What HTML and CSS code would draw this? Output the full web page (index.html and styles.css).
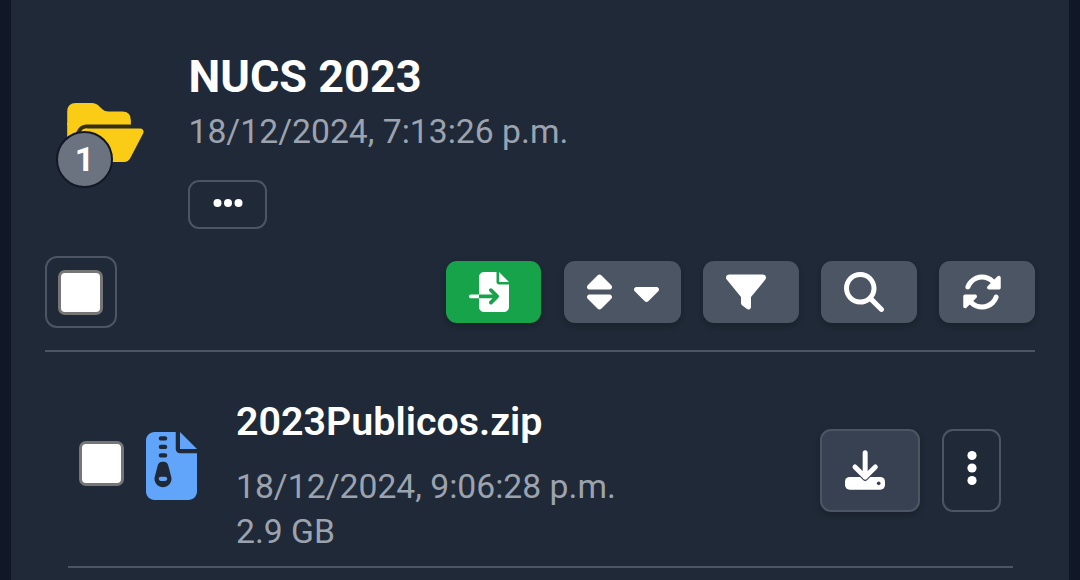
FILE: index.html
```html
<!DOCTYPE html>
<html lang="es">
<head>
    <meta charset="UTF-8">
    <title>NUCS 2023</title>
    <link rel="stylesheet" href="styles.css">
</head>
<body>
    <main class="panel">
        <!-- Folder header -->
        <header class="folder">
            <div class="folder-icon">
                <svg class="icon-folder" viewBox="0 0 231 178">
                    <path class="folder-back" d="M0 178V26Q0 0 26 0H74Q88 0 98 11L106 19Q113 26 124 26H166Q192 26 192 52V66H0Z"/>
                    <path class="folder-back" d="M0 60H70L0 178Z"/>
                    <path class="folder-line" d="M192 71H58Q42 71 34 88L4 140"/>
                    <path d="M60 77H220Q234 79 229 92L190 167Q184 178 172 178H0L40 90Q46 77 60 77Z"/>
                </svg>
                <span class="badge">1</span>
            </div>
            <div class="folder-info">
                <h1>NUCS 2023</h1>
                <p>18/12/2024, 7:13:26 p.m.</p>
                <button class="btn-more" aria-label="Más">
                    <svg viewBox="0 0 30 10"><circle cx="4.5" cy="5" r="4"/><circle cx="15" cy="5" r="4"/><circle cx="25.5" cy="5" r="4"/></svg>
                </button>
            </div>
        </header>

        <!-- Toolbar -->
        <div class="toolbar">
            <label class="select-all"><input type="checkbox" class="check"></label>
            <div class="actions">
                <button class="btn btn-green" aria-label="Importar">
                    <svg class="icon" viewBox="0 0 512 512"><path d="M128 64c0-35.300 28.700-64 64-64H352V128c0 17.700 14.300 32 32 32H512V448c0 35.300-28.700 64-64 64H192c-35.300 0-64-28.700-64-64V336H302.100l-39 39c-9.400 9.400-9.400 24.600 0 33.900s24.600 9.400 33.900 0l80-80c9.400-9.400 9.400-24.600 0-33.900l-80-80c-9.400-9.400-24.600-9.400-33.900 0s-9.400 24.600 0 33.900l39 39H128V64zm0 224v48H24c-13.300 0-24-10.700-24-24s10.700-24 24-24H128zM512 128H384V0L512 128z"/></svg>
                </button>
                <button class="btn btn-sort" aria-label="Ordenar">
                    <svg class="icon icon-narrow" viewBox="0 0 320 512"><path d="M137.400 41.400c12.500-12.500 32.800-12.500 45.300 0l128 128c9.200 9.200 11.900 22.900 6.900 34.900s-16.600 19.800-29.600 19.800H32c-12.900 0-24.600-7.800-29.600-19.800s-2.200-25.700 6.900-34.900l128-128zm0 429.300l-128-128c-9.200-9.200-11.900-22.900-6.900-34.900s16.600-19.800 29.600-19.800H288c12.900 0 24.600 7.800 29.600 19.800s2.200 25.700-6.900 34.900l-128 128c-12.500 12.500-32.800 12.500-45.300 0z"/></svg>
                    <svg class="icon icon-narrow" viewBox="0 0 320 512"><path d="M137.400 374.600c12.500 12.500 32.800 12.500 45.300 0l128-128c9.200-9.200 11.900-22.900 6.900-34.900s-16.600-19.800-29.600-19.800L32 192c-12.900 0-24.600 7.800-29.600 19.800s-2.200 25.700 6.900 34.900l128 128z"/></svg>
                </button>
                <button class="btn" aria-label="Filtrar">
                    <svg class="icon" viewBox="0 0 512 512"><path d="M3.900 54.900C10.500 40.900 24.500 32 40 32H472c15.500 0 29.500 8.900 36.100 22.900s4.600 30.500-5.200 42.500L320 320.900V448c0 12.100-6.800 23.200-17.700 28.600s-23.800 4.300-33.500-3l-64-48c-8.100-6-12.800-15.500-12.800-25.600V320.900L9 97.300C-.7 85.400-2.800 68.800 3.900 54.900z"/></svg>
                </button>
                <button class="btn" aria-label="Buscar">
                    <svg class="icon" viewBox="0 0 512 512"><path d="M416 208c0 45.900-14.900 88.300-40 122.700L502.600 457.400c12.500 12.500 12.500 32.800 0 45.300s-32.800 12.500-45.300 0L330.700 376c-34.400 25.200-76.800 40-122.700 40C93.100 416 0 322.900 0 208S93.100 0 208 0S416 93.100 416 208zM208 352a144 144 0 1 0 0-288 144 144 0 1 0 0 288z"/></svg>
                </button>
                <button class="btn" aria-label="Actualizar">
                    <svg class="icon" viewBox="0 0 512 512"><path d="M142.900 142.900c62.200-62.200 162.700-62.500 225.300-1L327 183c-6.900 6.900-8.900 17.200-5.200 26.200s12.500 14.800 22.200 14.800H472c13.300 0 24-10.700 24-24V72c0-9.700-5.800-18.500-14.800-22.200s-19.300-1.700-26.200 5.200L413.400 96.600c-87.600-86.500-228.700-86.200-315.800 1C73.200 122 55.600 150.700 44.800 181.400c-5.900 16.700 2.900 34.900 19.500 40.800s34.900-2.900 40.800-19.500c7.700-21.800 20.200-42.300 37.800-59.800zM16 312V440c0 9.700 5.800 18.500 14.800 22.200s19.300 1.700 26.200-5.200l41.600-41.600c87.600 86.500 228.700 86.200 315.800-1c24.400-24.400 42.100-53.100 52.900-83.700c5.900-16.700-2.900-34.900-19.500-40.800s-34.900 2.900-40.800 19.500c-7.700 21.800-20.200 42.300-37.800 59.800c-62.200 62.200-162.700 62.500-225.300 1L185 329c6.900-6.900 8.900-17.200 5.200-26.200s-12.500-14.800-22.200-14.800H40c-13.300 0-24 10.700-24 24z"/></svg>
                </button>
            </div>
        </div>

        <!-- File list -->
        <div class="file">
            <input type="checkbox" class="check">
            <svg class="icon-zip" viewBox="0 0 384 512"><path d="M64 0C28.700 0 0 28.700 0 64V448c0 35.300 28.700 64 64 64H320c35.300 0 64-28.700 64-64V160H256c-17.700 0-32-14.300-32-32V0H64zM256 0V128H384L256 0zM96 48c0-8.800 7.200-16 16-16h32c8.800 0 16 7.200 16 16s-7.200 16-16 16H112c-8.800 0-16-7.200-16-16zm0 64c0-8.800 7.200-16 16-16h32c8.800 0 16 7.200 16 16s-7.200 16-16 16H112c-8.800 0-16-7.200-16-16zm0 64c0-8.800 7.200-16 16-16h32c8.800 0 16 7.200 16 16s-7.200 16-16 16H112c-8.800 0-16-7.200-16-16zm-6.300 71.800c3.700-14 16.400-23.800 30.900-23.800h14.800c14.500 0 27.200 9.700 30.900 23.800l23.500 88.200c1.400 5.400 2.100 10.900 2.100 16.400c0 35.200-28.800 63.700-64 63.700s-64-28.500-64-63.700c0-5.500 .7-11.100 2.100-16.400l23.500-88.200zM112 336c-8.800 0-16 7.200-16 16s7.200 16 16 16h32c8.800 0 16-7.200 16-16s-7.200-16-16-16H112z"/></svg>
            <div class="file-info">
                <h2>2023Publicos.zip</h2>
                <p>18/12/2024, 9:06:28 p.m.</p>
                <p>2.9 GB</p>
            </div>
            <button class="btn-download" aria-label="Descargar">
                <svg class="icon" viewBox="0 0 120 120">
                    <rect y="81" width="120" height="38" rx="14"/>
                    <circle class="dot" cx="101" cy="100" r="5.500"/>
                    <path class="notch" d="M43 79L55 91Q60.500 96 66 91L78 79Z"/>
                    <path class="arrow" d="M60.500 8V81M30 51L60.500 81L91 51"/>
                </svg>
            </button>
            <button class="btn-kebab" aria-label="Opciones">
                <svg viewBox="0 0 10 36"><circle cx="5" cy="5.500" r="4.600"/><circle cx="5" cy="18" r="4.600"/><circle cx="5" cy="30.500" r="4.600"/></svg>
            </button>
        </div>
    </main>
</body>
</html>
```
FILE: styles.css
```css
* {
    box-sizing: border-box;
}

body {
    margin: 0;
    height: 580px;
    padding: 0 11px;
    overflow: hidden;
    background-color: #101727;
    color: #fff;
    font-family: Roboto, sans-serif;
}

h1, h2, p {
    margin: 0;
    white-space: nowrap;
}

p {
    color: #9ca3af;
    font-size: 33.7px;
}

svg {
    display: block;
    fill: #fff;
}

button {
    display: flex;
    align-items: center;
    margin: 0;
    border: 2px solid #4b5563;
    border-radius: 11px;
    background: none;
}

.panel {
    height: 580px;
    padding: 50px 34px 0;
    background-color: #1f2937;
}

/* Folder header */
.folder {
    display: flex;
    height: 206px;
}

.folder-icon {
    position: relative;
    width: 143px;
    padding: 53px 0 0 22px;
}

.icon-folder {
    width: 77px;
    height: 59px;
    fill: #facc15;
}

.folder-line {
    fill: none;
    stroke: #352f15;
    stroke-width: 12;
}

.badge {
    position: absolute;
    left: 11px;
    top: 81px;
    width: 57px;
    height: 57px;
    border: 2px solid #111827;
    border-radius: 50%;
    background-color: #6b7280;
    font-size: 34px;
    font-weight: 700;
    line-height: 52px;
    text-align: center;
}

.folder-info {
    padding-left: 0.5px;
}

.folder-info h1 {
    height: 54px;
    font-size: 45px;
    font-weight: 700;
    line-height: 54px;
}

.folder-info p {
    height: 56px;
    line-height: 56px;
}

.btn-more {
    width: 79px;
    height: 49px;
    margin: 20px 0 0 -0.5px;
    padding: 0 0 4px 22.500px;
}

.btn-more svg {
    width: 30px;
    height: 10px;
}

/* Toolbar */
.toolbar {
    display: flex;
    justify-content: space-between;
    height: 96px;
    border-bottom: 2px solid #4b5563;
}

.select-all {
    width: 72px;
    height: 72px;
    padding: 12px 11px;
    border: 2px solid #4b5563;
    border-radius: 12px;
}

.check {
    appearance: none;
    display: block;
    flex: none;
    width: 45px;
    height: 45px;
    margin: 0;
    border: 3px solid #767676;
    border-radius: 7px;
    background-color: #fff;
}

.actions {
    display: flex;
    gap: 22px;
    padding-top: 5px;
}

.btn {
    width: 96px;
    height: 62px;
    padding: 0 0 1px 22.5px;
    border: 0;
    background-color: #4b5563;
    box-shadow: 0 3px 6px rgba(0, 0, 0, 0.2);
}

.btn-green {
    width: 95px;
    margin-right: 1px;
    background-color: #16a34a;
}

.btn-sort {
    gap: 22px;
    width: 117px;
}

.icon {
    width: 40px;
    height: 40px;
}

.icon-narrow {
    width: 25px;
}

/* File row */
.file {
    display: flex;
    align-items: flex-start;
    height: 216px;
    margin: 0 22px 0 23px;
    padding: 46px 12px 0 11px;
    border-bottom: 2px solid #4b5563;
}

.file .check {
    margin-top: 43px;
}

.icon-zip {
    width: 51px;
    height: 68px;
    margin: 34px 39px 0 22px;
    fill: #60a5fa;
}

.file-info {
    flex: 1;
}

.file-info h2 {
    height: 66px;
    font-size: 39.4px;
    font-weight: 600;
    line-height: 48px;
}

.file-info p {
    line-height: 45px;
}

.btn-download {
    width: 100px;
    height: 83px;
    margin: 31px 22px 0 0;
    padding: 0 0 1px 22.5px;
    background-color: #374151;
    box-shadow: 0 3px 6px rgba(0, 0, 0, 0.2);
}

.btn-download .dot,
.btn-download .notch {
    fill: #374151;
}

.btn-download .arrow {
    fill: none;
    stroke: #fff;
    stroke-width: 15;
    stroke-linecap: round;
    stroke-linejoin: round;
}

.btn-kebab {
    width: 59px;
    height: 83px;
    margin-top: 31px;
    padding: 0 0 5px 23px;
}

.btn-kebab svg {
    width: 10px;
    height: 36px;
}
```
